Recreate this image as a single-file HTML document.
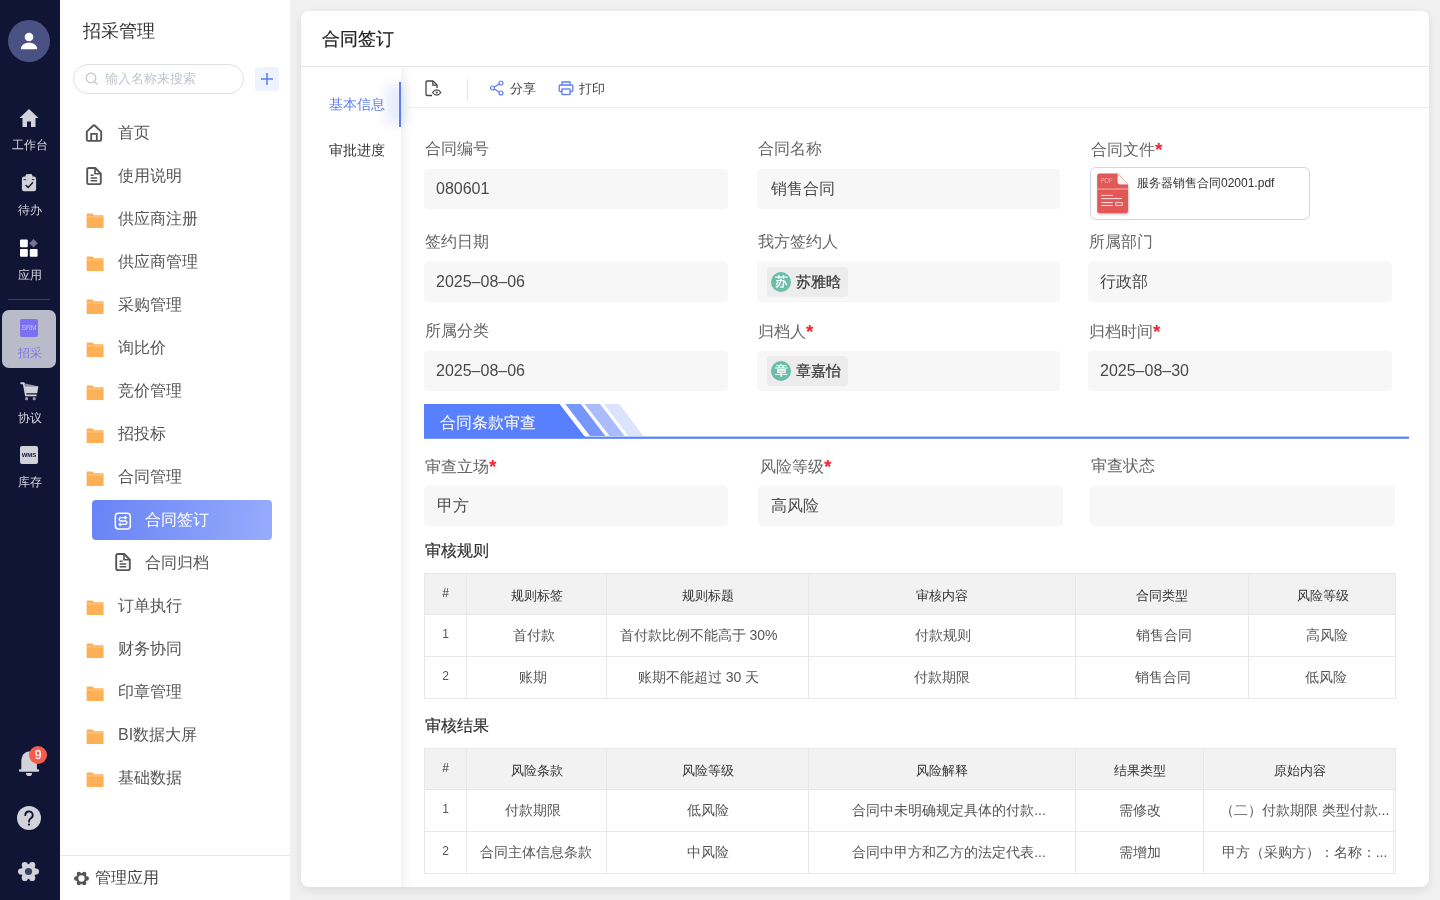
<!DOCTYPE html>
<html><head><meta charset="utf-8">
<style>
*{box-sizing:border-box;margin:0;padding:0}
html,body{width:1440px;height:900px;overflow:hidden;background:#f0f0f0;font-family:"Liberation Sans",sans-serif;color:#333}
.abs{position:absolute}
#rail,#side,#card{will-change:transform}
#rail{position:absolute;left:0;top:0;width:60px;height:900px;background:#101435}
#side{position:absolute;left:60px;top:0;width:230px;height:900px;background:#fff}
.rl{position:absolute;left:0;width:60px;text-align:center;font-size:12px;color:#d6d7de;line-height:12px;white-space:nowrap}
.mi{position:absolute;left:0;width:230px;height:20px;font-size:16px;line-height:20px;color:#555;white-space:nowrap}
.mi .ic{position:absolute;left:25px;top:2px}
.mi .ic.f{left:26px}
.mi span{position:absolute;left:58px;top:1px}
#card{position:absolute;left:301px;top:11px;width:1128px;height:876px;background:#fff;border-radius:8px;box-shadow:0 3px 10px rgba(0,0,0,.09);overflow:hidden}
.lbl{position:absolute;font-size:16px;line-height:16px;color:#666;white-space:nowrap}
.lbl i{color:#f5222d;font-style:normal;font-size:19px;font-weight:bold;position:relative;top:1px}
.inp{position:absolute;width:304px;height:40px;background:#f7f7f7;border-radius:4px;font-size:16px;line-height:40px;color:#4a4a4a;padding-left:12px;white-space:nowrap}
.chip{position:absolute;left:10px;top:5px;height:30px;background:#ececec;border-radius:4px;padding:0 7px 0 4px;line-height:30px;font-size:15px;color:#3a3a3a;-webkit-text-stroke:.25px #3a3a3a}
.chip b{display:inline-block;width:20px;height:20px;border-radius:10px;background:#6abda8;color:#fff;font-weight:normal;font-size:13px;line-height:20px;text-align:center;vertical-align:middle;margin-right:5px;position:relative;top:-1px;-webkit-text-stroke:.3px #fff}
table{position:absolute;border-collapse:collapse;table-layout:fixed}
td,th{border:1px solid #e8e8e8;text-align:center;font-size:14px;color:#555;height:42px;padding:0;white-space:nowrap;overflow:hidden}
th{background:#f2f2f2;font-size:13px;color:#333;font-weight:normal;height:41px;padding-top:4px}
s{text-decoration:none;position:relative}
.t2 tr+tr td:last-child{box-shadow:inset -1px 0 0 #fff,inset -2px 0 0 #e8e8e8}
.h{font-size:12px;vertical-align:top;padding-top:12px}
</style></head><body>
<div id="rail">
  <div class="abs" style="left:8px;top:20px;width:42px;height:42px;border-radius:21px;background:#4a5284"></div>
  <svg class="abs" style="left:20px;top:32px" width="18" height="18" viewBox="0 0 18 18"><circle cx="9" cy="5" r="4.3" fill="#fff"/><path d="M0.8 17.2c0-3.9 3.6-6.4 8.2-6.4s8.2 2.5 8.2 6.4z" fill="#fff"/></svg>
  <svg class="abs" style="left:19px;top:108px" width="20" height="20" viewBox="0 0 20 20"><path d="M10 1L0.5 10h3v9h4.5v-5.5h4V19h4.5v-9h3z" fill="#d1d2da"/></svg>
  <div class="rl" style="top:139px">工作台</div>
  <svg class="abs" style="left:21px;top:174px" width="16" height="18" viewBox="0 0 16 18"><rect x="0.9" y="2.6" width="14.2" height="14.7" rx="2.3" fill="#d1d2da"/><rect x="4.8" y="0.2" width="6.4" height="5.2" rx="1.4" fill="#d1d2da"/><path d="M2.6 5.6h10.8" stroke="#101435" stroke-width=".9"/><rect x="4.8" y="0.2" width="6.4" height="6.2" rx="1.4" fill="#d1d2da"/><path d="M4.6 11l2.6 2.4 4.8-5.2" fill="none" stroke="#101435" stroke-width="1.4"/></svg>
  <div class="rl" style="top:204px">待办</div>
  <svg class="abs" style="left:20px;top:239px" width="18" height="18" viewBox="0 0 18 18"><rect x="0" y="0.5" width="7.8" height="7.8" rx="1" fill="#fff"/><rect x="0" y="10" width="7.8" height="7.8" rx="1" fill="#fff"/><rect x="9.8" y="10" width="7.8" height="7.8" rx="1" fill="#fff"/><path d="M13.5 0l4.3 4.3-4.3 4.3-4.3-4.3z" fill="#72758c"/></svg>
  <div class="rl" style="top:269px">应用</div>
  <div class="abs" style="left:8px;top:299px;width:42px;height:1px;background:#3a3d5e"></div>
  <div class="abs" style="left:2px;top:310px;width:54px;height:58px;border-radius:7px;background:#babbc8"></div>
  <div class="abs" style="left:20px;top:319px;width:18px;height:18px;border-radius:2px;background:#7b6ff2;color:#c9c4fb;font-size:7px;line-height:18px;text-align:center;letter-spacing:-.2px">SRM</div>
  <div class="rl" style="top:347px;color:#7e74ee">招采</div>
  <svg class="abs" style="left:19px;top:381px" width="21" height="20" viewBox="0 0 21 20"><path d="M2.2 2.2h2.6" stroke="#d1d2da" stroke-width="2" stroke-linecap="round"/><path d="M4.6 2.2L6.8 14.3H17.5" fill="none" stroke="#d1d2da" stroke-width="1.7"/><path d="M6.3 2.6L19.2 5.2H5.8z" fill="#8e90a2"/><path d="M5.6 5.2H19.4L18.2 12.3H6.9z" fill="#d1d2da"/><circle cx="7.6" cy="17.7" r="1.6" fill="#9a9cad"/><circle cx="15.2" cy="17.7" r="1.6" fill="#9a9cad"/></svg>
  <div class="rl" style="top:412px">协议</div>
  <div class="abs" style="left:20px;top:446px;width:18px;height:18px;border-radius:2px;background:#d1d2da;color:#101435;font-size:6px;font-weight:bold;line-height:18px;text-align:center">WMS</div>
  <div class="rl" style="top:476px">库存</div>
  <svg class="abs" style="left:18px;top:750px" width="22" height="27" viewBox="0 0 22 27"><path d="M3.3 20V11.5C3.3 5.8 6.6 1.6 11 1.6S18.9 5.8 18.9 11.5V20z" fill="#d1d2da"/><rect x="0.9" y="19.2" width="20.2" height="2.6" rx="1.3" fill="#d1d2da"/><path d="M7.9 22.9h6.2a3.1 3.1 0 0 1-6.2 0z" fill="#d1d2da"/></svg>
  <div class="abs" style="left:29px;top:746px;width:18px;height:18px;border-radius:9px;background:#f65b4e;color:#fff;font-size:12px;line-height:18px;text-align:center;-webkit-text-stroke:.3px #fff">9</div>
  <svg class="abs" style="left:17px;top:806px" width="24" height="24" viewBox="0 0 24 24"><circle cx="12" cy="12" r="12" fill="#d1d2da"/><path d="M8.3 9.2a3.7 3.7 0 1 1 5.6 3.1c-1.2.8-1.9 1.4-1.9 2.9v.6" fill="none" stroke="#101435" stroke-width="1.8" stroke-linecap="round"/><circle cx="12" cy="18.6" r="1.15" fill="#101435"/></svg>
  <svg class="abs" style="left:18px;top:861px" width="21" height="21" viewBox="-10.5 -10.5 21 21"><g fill="#d1d2da"><circle r="7.6"/><circle cx="7.4" cy="0" r="3.1"/><circle cx="3.7" cy="6.41" r="3.1"/><circle cx="-3.7" cy="6.41" r="3.1"/><circle cx="-7.4" cy="0" r="3.1"/><circle cx="-3.7" cy="-6.41" r="3.1"/><circle cx="3.7" cy="-6.41" r="3.1"/></g><circle r="3.6" fill="#3d4062"/></svg>
</div>
<div id="side">
  <div class="abs" style="left:23px;top:20px;font-size:18px;line-height:22px;color:#333">招采管理</div>
  <div class="abs" style="left:13px;top:64px;width:171px;height:30px;border:1px solid #dcdfe6;border-radius:15px"></div>
  <svg class="abs" style="left:25px;top:72px" width="14" height="14" viewBox="0 0 14 14"><circle cx="6" cy="6" r="4.8" fill="none" stroke="#c0c4cc" stroke-width="1.2"/><path d="M9.5 9.5l3 3" stroke="#c0c4cc" stroke-width="1.2"/></svg>
  <div class="abs" style="left:45px;top:70px;font-size:13px;line-height:17px;color:#c0c4cc">输入名称来搜索</div>
  <div class="abs" style="left:195px;top:67px;width:24px;height:24px;border-radius:3px;background:#eef3ff"></div>
  <svg class="abs" style="left:199px;top:71px" width="16" height="16" viewBox="0 0 16 16"><path d="M8 2v12M2 8h12" stroke="#5b7cf5" stroke-width="1.5"/></svg>
  <svg width="0" height="0" style="position:absolute"><defs>
   <symbol id="fold" viewBox="0 0 18 18"><path d="M0.6 4.6c0-.7.5-1.2 1.2-1.2h4.7l1.7 1.9h8.2c.7 0 1.2.5 1.2 1.2v10.6c0 .7-.5 1.2-1.2 1.2H1.8c-.7 0-1.2-.5-1.2-1.2z" fill="#fdb055"/><path d="M0.6 6.9h16.8" stroke="#fff" stroke-width=".7" opacity=".45"/></symbol>
   <symbol id="home" viewBox="0 0 18 18"><path d="M1.8 7.6L8 1.8a1.5 1.5 0 0 1 2 0l6.2 5.8V15.5a1.4 1.4 0 0 1-1.4 1.4H3.2a1.4 1.4 0 0 1-1.4-1.4z" fill="none" stroke="#555" stroke-width="1.9" stroke-linejoin="round"/><path d="M6.2 16.6V9.8h5.6v6.8" fill="none" stroke="#555" stroke-width="1.8"/></symbol>
   <symbol id="doc" viewBox="0 0 18 18"><path d="M2.2 2.6A1.6 1.6 0 0 1 3.8 1H10.3l5.5 5.6v9a1.6 1.6 0 0 1-1.6 1.6H3.8a1.6 1.6 0 0 1-1.6-1.6z" fill="none" stroke="#555" stroke-width="1.9" stroke-linejoin="round"/><path d="M10 1.5V6.8h5.3M5.6 8.2h3M5.6 11h6.6M5.6 13.8h6.6" fill="none" stroke="#555" stroke-width="1.6"/></symbol>
  </defs></svg>
  <div class="mi" style="top:122px"><svg class="ic" width="18" height="18"><use href="#home"/></svg><span>首页</span></div>
  <div class="mi" style="top:165px"><svg class="ic" width="18" height="18"><use href="#doc"/></svg><span>使用说明</span></div>
  <div class="mi" style="top:208px"><svg class="ic f" width="18" height="18"><use href="#fold"/></svg><span>供应商注册</span></div>
  <div class="mi" style="top:251px"><svg class="ic f" width="18" height="18"><use href="#fold"/></svg><span>供应商管理</span></div>
  <div class="mi" style="top:294px"><svg class="ic f" width="18" height="18"><use href="#fold"/></svg><span>采购管理</span></div>
  <div class="mi" style="top:337px"><svg class="ic f" width="18" height="18"><use href="#fold"/></svg><span>询比价</span></div>
  <div class="mi" style="top:380px"><svg class="ic f" width="18" height="18"><use href="#fold"/></svg><span>竞价管理</span></div>
  <div class="mi" style="top:423px"><svg class="ic f" width="18" height="18"><use href="#fold"/></svg><span>招投标</span></div>
  <div class="mi" style="top:466px"><svg class="ic f" width="18" height="18"><use href="#fold"/></svg><span>合同管理</span></div>
  <div class="mi" style="top:595px"><svg class="ic f" width="18" height="18"><use href="#fold"/></svg><span>订单执行</span></div>
  <div class="mi" style="top:638px"><svg class="ic f" width="18" height="18"><use href="#fold"/></svg><span>财务协同</span></div>
  <div class="mi" style="top:681px"><svg class="ic f" width="18" height="18"><use href="#fold"/></svg><span>印章管理</span></div>
  <div class="mi" style="top:724px"><svg class="ic f" width="18" height="18"><use href="#fold"/></svg><span>BI数据大屏</span></div>
  <div class="mi" style="top:767px"><svg class="ic f" width="18" height="18"><use href="#fold"/></svg><span>基础数据</span></div>
  <div class="abs" style="left:32px;top:500px;width:180px;height:40px;border-radius:4px;background:linear-gradient(100deg,#6783f6,#97acfb)"></div>
  <svg class="abs" style="left:54px;top:512px" width="18" height="18" viewBox="0 0 18 18"><rect x="1.3" y="1.3" width="15" height="15.6" rx="3.2" fill="none" stroke="#fff" stroke-width="1.5"/><path d="M12.4 5.6H6.9a1.7 1.7 0 0 0 0 3.4h4.3a1.7 1.7 0 0 1 0 3.4H5.2M10.8 4.3l1.6 1.3-1.6 1.3M6.8 11.1l-1.6 1.3 1.6 1.3" fill="none" stroke="#fff" stroke-width="1.4" stroke-linejoin="round"/></svg>
  <div class="abs" style="left:85px;top:510px;font-size:16px;line-height:20px;color:#fff">合同签订</div>
  <svg class="abs" style="left:54px;top:553px" width="18" height="18"><use href="#doc"/></svg>
  <div class="abs" style="left:85px;top:553px;font-size:16px;line-height:20px;color:#555">合同归档</div>
  <div class="abs" style="left:0;top:855px;width:230px;height:1px;background:#e8e8e8"></div>
  <svg class="abs" style="left:14px;top:871px" width="15" height="15" viewBox="-10.5 -10.5 21 21"><g fill="#555"><circle r="7.6"/><circle cx="7.4" cy="0" r="3.1"/><circle cx="3.7" cy="6.41" r="3.1"/><circle cx="-3.7" cy="6.41" r="3.1"/><circle cx="-7.4" cy="0" r="3.1"/><circle cx="-3.7" cy="-6.41" r="3.1"/><circle cx="3.7" cy="-6.41" r="3.1"/></g><circle r="4.4" fill="#fff"/></svg>
  <div class="abs" style="left:35px;top:868px;font-size:16px;line-height:20px;color:#444">管理应用</div>
</div>
<div id="card">
  <div class="abs" style="left:21px;top:17px;font-size:18px;line-height:22px;color:#222;-webkit-text-stroke:.2px #222">合同签订</div>
  <div class="abs" style="left:0;top:55px;width:1128px;height:1px;background:#e4e4e4"></div>
  <div class="abs" style="left:100px;top:56px;width:10px;height:820px;background:linear-gradient(90deg,rgba(0,0,0,.045),rgba(0,0,0,0))"></div>
  <div class="abs" style="left:86px;top:74px;width:18px;height:39px;background:rgba(91,124,245,.16);filter:blur(6px)"></div>
  <div class="abs" style="left:98px;top:71px;width:2px;height:45px;background:#5b7cf5"></div>
  <div class="abs" style="left:28px;top:85px;font-size:14px;line-height:16px;color:#5b7cf5">基本信息</div>
  <div class="abs" style="left:28px;top:131px;font-size:14px;line-height:16px;color:#333">审批进度</div>
  <div class="abs" style="left:100px;top:96px;width:1028px;height:1px;background:#ececec"></div>
  <svg class="abs" style="left:123px;top:69px" width="18" height="18" viewBox="0 0 18 18"><path d="M8 15.5H3.2A1.2 1.2 0 0 1 2 14.3V2.2A1.2 1.2 0 0 1 3.2 1H9l4 4v3" fill="none" stroke="#444" stroke-width="1.3" stroke-linejoin="round"/><path d="M8.8 1.2V5.2h4" fill="none" stroke="#444" stroke-width="1.2"/><path d="M8.5 12.5c1.3-1.8 2.7-2.6 4.2-2.6s2.9.8 4.2 2.6c-1.3 1.8-2.7 2.6-4.2 2.6s-2.9-.8-4.2-2.6z" fill="none" stroke="#444" stroke-width="1.2"/><circle cx="12.7" cy="12.5" r="1.1" fill="#444"/></svg>
  <div class="abs" style="left:166px;top:68px;width:1px;height:22px;background:#e6e6e6"></div>
  <svg class="abs" style="left:188px;top:69px" width="16" height="16" viewBox="0 0 16 16"><circle cx="12" cy="3" r="2" fill="none" stroke="#5b7cf5" stroke-width="1.2"/><circle cx="3.5" cy="8" r="2" fill="none" stroke="#5b7cf5" stroke-width="1.2"/><circle cx="12" cy="13" r="2" fill="none" stroke="#5b7cf5" stroke-width="1.2"/><path d="M5.3 7l4.9-3M5.3 9l4.9 3" stroke="#5b7cf5" stroke-width="1.2"/></svg>
  <div class="abs" style="left:209px;top:70px;font-size:13px;line-height:16px;color:#444">分享</div>
  <svg class="abs" style="left:257px;top:69px" width="16" height="16" viewBox="0 0 16 16"><path d="M4 5V2h8v3" fill="none" stroke="#5b7cf5" stroke-width="1.3"/><path d="M4 11.5H2.5a1.3 1.3 0 0 1-1.3-1.3V6.3A1.3 1.3 0 0 1 2.5 5h11a1.3 1.3 0 0 1 1.3 1.3v3.9a1.3 1.3 0 0 1-1.3 1.3H12" fill="none" stroke="#5b7cf5" stroke-width="1.3"/><rect x="4" y="9" width="8" height="5.5" fill="none" stroke="#5b7cf5" stroke-width="1.3"/></svg>
  <div class="abs" style="left:278px;top:70px;font-size:13px;line-height:16px;color:#444">打印</div>
  <div class="lbl" style="left:124px;top:130px">合同编号</div>
  <div class="inp" style="left:123px;top:158px;width:304px">080601</div>
  <div class="lbl" style="left:457px;top:130px">合同名称</div>
  <div class="inp" style="left:456px;top:158px;width:303px;padding-left:14px">销售合同</div>
  <div class="lbl" style="left:790px;top:130px">合同文件<i>*</i></div>
  <div class="abs" style="left:789px;top:156px;width:220px;height:53px;border:1px solid #cfd6e4;border-radius:6px"></div>
  <svg class="abs" style="left:795px;top:161px" width="34" height="44" viewBox="-1 -1 34 44"><defs><filter id="sh" x="-20%" y="-20%" width="140%" height="140%"><feDropShadow dx=".6" dy="1" stdDeviation=".8" flood-color="#000" flood-opacity=".28"/></filter></defs><path d="M2.5 0.5H20.5L31 11.5V38a2.3 2.3 0 0 1-2.3 2.3H2.5A2.3 2.3 0 0 1 .2 38V2.8A2.3 2.3 0 0 1 2.5 .5z" fill="#e25856" filter="url(#sh)"/><path d="M20.5 .5V8.5a3 3 0 0 0 3 3H31z" fill="#c94543"/><path d="M20.5 .5L31 11.5H23.5a3 3 0 0 1-3-3z" fill="#f4f1f1"/><rect x=".2" y="15.3" width="30.8" height="1.5" fill="#ef9795"/><text x="3.4" y="10.4" font-size="6.4" fill="#f3b0ae" font-family="Liberation Sans" letter-spacing="-.3">PDF</text><g fill="#fbe2e1"><rect x="4.2" y="21.9" width="11.6" height="1"/><rect x="4.2" y="25.1" width="20.6" height="1"/><rect x="4.2" y="29.1" width="11.6" height="1"/><rect x="4.2" y="32" width="11.6" height="1"/></g><rect x="18.8" y="29.6" width="6.4" height="2.8" fill="none" stroke="#fbe2e1" stroke-width=".9"/></svg>
  <div class="abs" style="left:836px;top:164px;font-size:12px;line-height:16px;color:#333">服务器销售合同02001.pdf</div>
  <div class="lbl" style="left:124px;top:223px">签约日期</div>
  <div class="inp" style="left:123px;top:251px;width:304px">2025–08–06</div>
  <div class="lbl" style="left:457px;top:223px">我方签约人</div>
  <div class="inp" style="left:456px;top:251px;width:303px"><div class="chip"><b>苏</b>苏雅晗</div></div>
  <div class="lbl" style="left:788px;top:223px">所属部门</div>
  <div class="inp" style="left:787px;top:251px;width:304px">行政部</div>
  <div class="lbl" style="left:124px;top:312px">所属分类</div>
  <div class="inp" style="left:123px;top:340px;width:304px">2025–08–06</div>
  <div class="lbl" style="left:457px;top:312px">归档人<i>*</i></div>
  <div class="inp" style="left:456px;top:340px;width:303px"><div class="chip"><b>章</b>章嘉怡</div></div>
  <div class="lbl" style="left:788px;top:312px">归档时间<i>*</i></div>
  <div class="inp" style="left:787px;top:340px;width:304px">2025–08–30</div>
  <svg class="abs" style="left:123px;top:393px" width="985" height="35" viewBox="0 0 985 35"><path d="M0 0h135.6l25.4 33H0z" fill="#587ffe"/><path d="M141.4 0h15.4l24.6 32H166z" fill="#7797fb"/><path d="M160.6 0h15.4l24.6 32H185.6z" fill="#aabcfc"/><path d="M179.8 0h15.4l24.1 32H204.3z" fill="#dce4fd"/><rect x="0" y="32.6" width="985" height="2.2" fill="#587ffe"/></svg>
  <div class="abs" style="left:139px;top:402px;font-size:16px;line-height:20px;color:#fff">合同条款审查</div>
  <div class="lbl" style="left:124px;top:447px">审查立场<i>*</i></div>
  <div class="inp" style="left:123px;top:475px;width:304px;padding-left:13px">甲方</div>
  <div class="lbl" style="left:459px;top:447px">风险等级<i>*</i></div>
  <div class="inp" style="left:457px;top:475px;width:305px;padding-left:13px">高风险</div>
  <div class="lbl" style="left:790px;top:447px">审查状态</div>
  <div class="inp" style="left:789px;top:475px;width:305px"></div>
  <div class="abs" style="left:124px;top:530px;font-size:16px;line-height:20px;color:#333;-webkit-text-stroke:.2px #333">审核规则</div>
  <table style="left:123px;top:562px;width:971px">
   <colgroup><col style="width:42px"><col style="width:140px"><col style="width:202px"><col style="width:267px"><col style="width:173px"><col style="width:147px"></colgroup>
   <tr><th class="h">#</th><th>规则标签</th><th>规则标题</th><th>审核内容</th><th>合同类型</th><th><s style="left:1px">风险等级</s></th></tr>
   <tr><td class="h">1</td><td><s style="left:-3px">首付款</s></td><td><s style="left:-9px">首付款比例不能高于 30%</s></td><td><s style="left:1px">付款规则</s></td><td><s style="left:2px">销售合同</s></td><td><s style="left:5px">高风险</s></td></tr>
   <tr><td class="h">2</td><td><s style="left:-4px">账期</s></td><td><s style="left:-9px">账期不能超过 30 天</s></td><td><s>付款期限</s></td><td><s style="left:1px">销售合同</s></td><td><s style="left:4px">低风险</s></td></tr>
  </table>
  <div class="abs" style="left:124px;top:705px;font-size:16px;line-height:20px;color:#333;-webkit-text-stroke:.2px #333">审核结果</div>
  <table style="left:123px;top:737px;width:971px" class="t2">
   <colgroup><col style="width:42px"><col style="width:140px"><col style="width:202px"><col style="width:267px"><col style="width:128px"><col style="width:192px"></colgroup>
   <tr><th class="h">#</th><th>风险条款</th><th>风险等级</th><th>风险解释</th><th>结果类型</th><th>原始内容</th></tr>
   <tr><td class="h">1</td><td><s style="left:-4px">付款期限</s></td><td><s>低风险</s></td><td><s style="left:7px">合同中未明确规定具体的付款...</s></td><td><s>需修改</s></td><td><s style="left:5px">（二）付款期限 类型付款...</s></td></tr>
   <tr><td class="h">2</td><td><s style="left:-1px">合同主体信息条款</s></td><td><s>中风险</s></td><td><s style="left:7px">合同中甲方和乙方的法定代表...</s></td><td><s>需增加</s></td><td><s style="left:5px">甲方（采购方）：名称：...</s></td></tr>
  </table>
</div>
</body></html>
